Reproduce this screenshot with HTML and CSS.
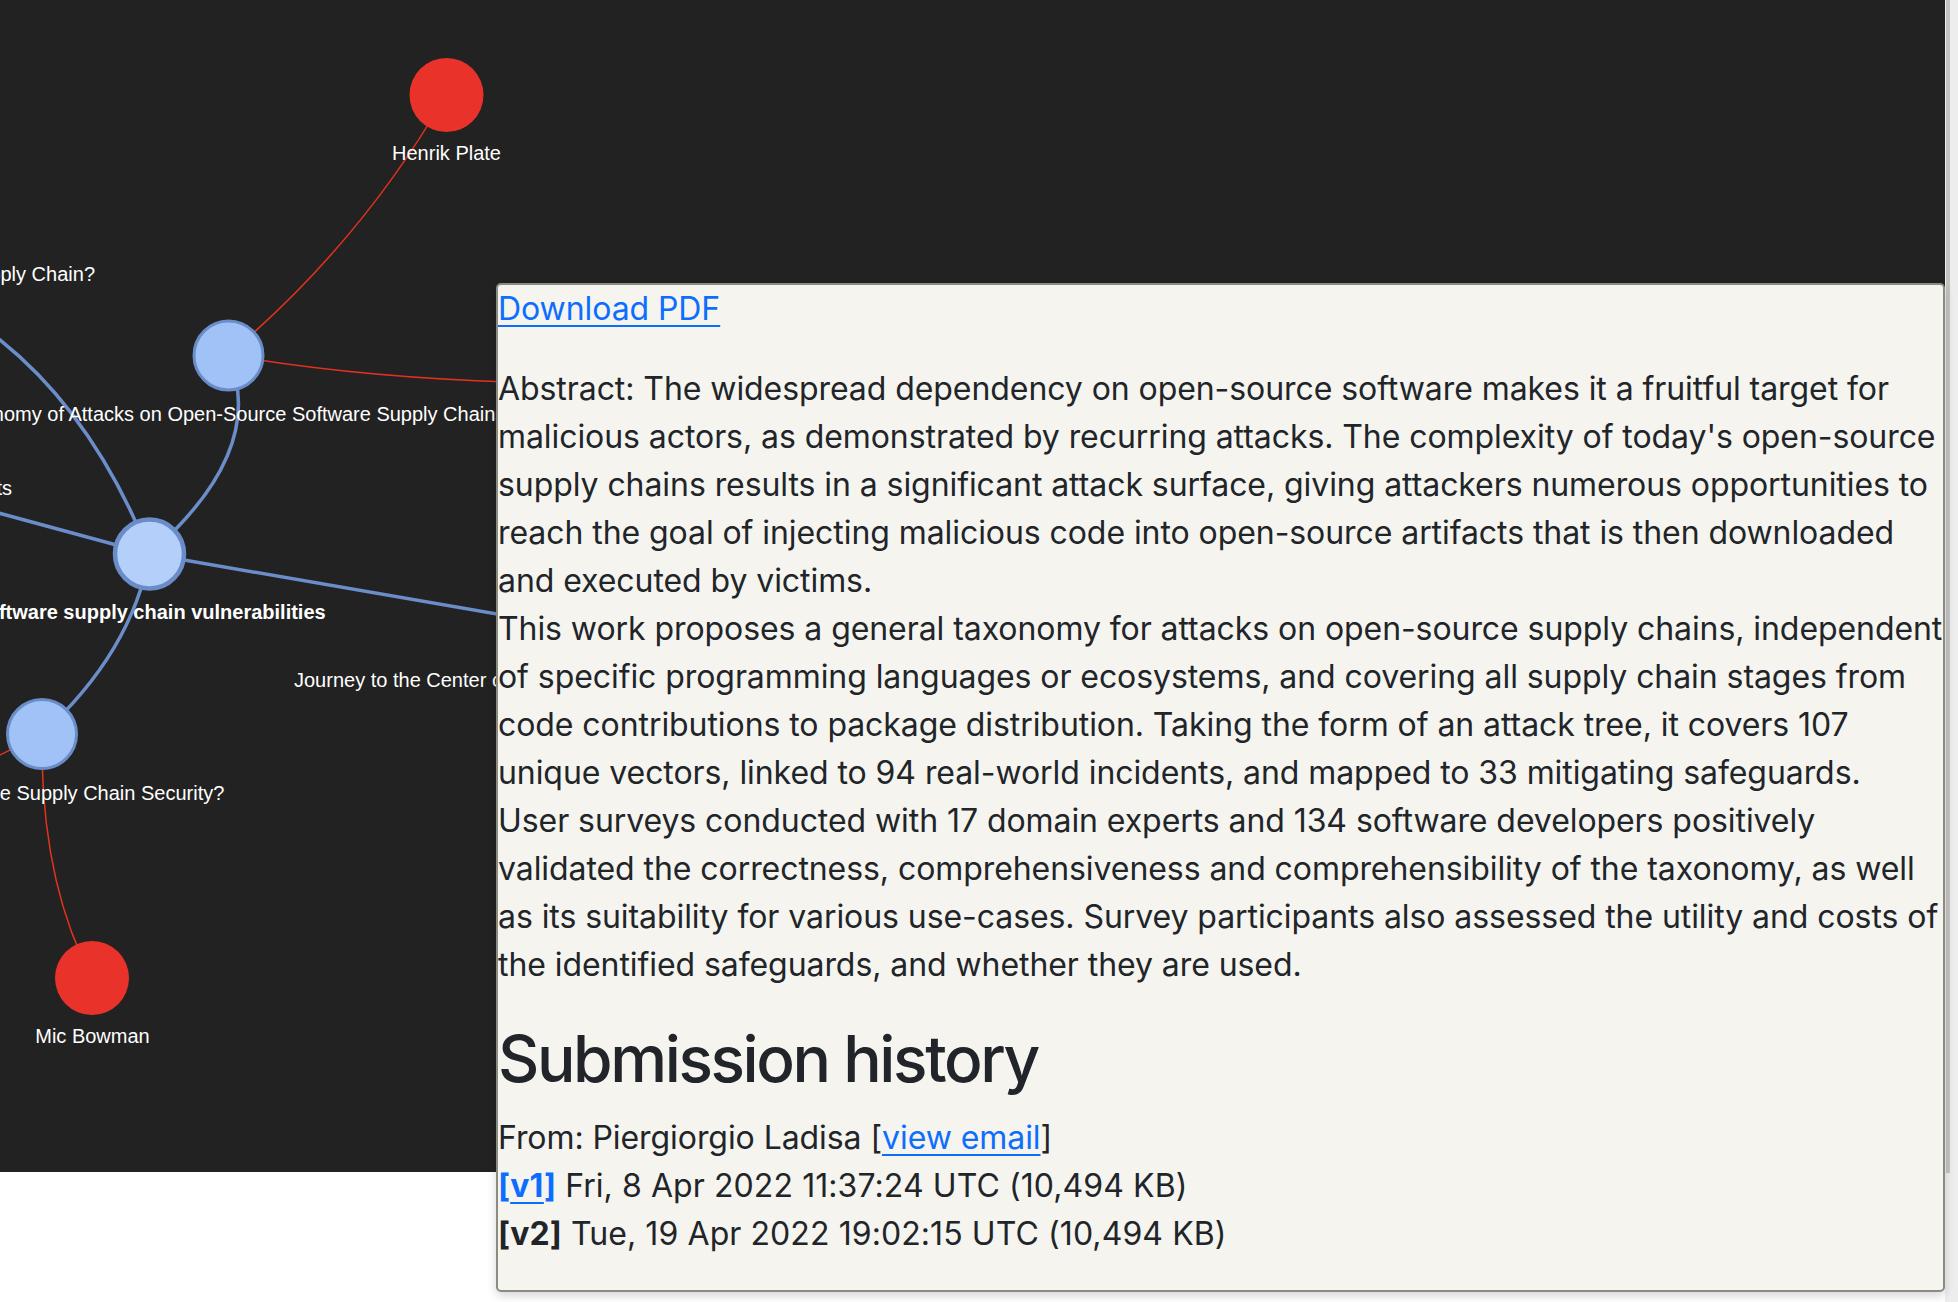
FILE: index.html
```html
<!DOCTYPE html>
<html lang="en">
<head>
<meta charset="utf-8">
<title>Paper graph</title>
<link rel="stylesheet" href="styles.css">
</head>
<body>
<div class="page">
  <main class="graph">
    <svg class="graph-svg" width="1945" height="1172" viewBox="0 0 1945 1172">
      <defs>
        <clipPath id="visible-area"><rect x="-200" y="0" width="697" height="1172"/></clipPath>
      </defs>
      <g class="edges-blue">
        <path d="M228 355 Q269 449.5 149.5 554"/>
        <path d="M149.5 554 Q132 652 42 734"/>
        <path d="M-40 309 L0 340 Q94 415 149.5 554"/>
        <path d="M-60 497 L149.5 554"/>
        <path d="M149.5 554 L543 622"/>
      </g>
      <g class="edges-red">
        <path d="M228 355 Q360 244 446 95"/>
        <path d="M228 355 Q380 381 560 383"/>
        <path d="M42 734 Q40 880 92 978"/>
        <path d="M42 734 L-40 775"/>
      </g>
      <g class="nodes">
        <circle class="node-author" cx="446.5" cy="95" r="37"/>
        <circle class="node-author" cx="92" cy="978" r="37"/>
        <circle class="node-paper" cx="228.5" cy="355.5" r="34.5"/>
        <circle class="node-paper node-focus" cx="149.5" cy="554" r="34.5"/>
        <circle class="node-paper" cx="42" cy="734" r="34.5"/>
      </g>
      <g class="labels">
        <text x="446.5" y="160" text-anchor="middle">Henrik Plate</text>
        <text x="95" y="281" text-anchor="end">What are Weak Links in the npm Supply Chain?</text>
        <text x="12" y="495" text-anchor="end">Detecting Supply Chain Attacks in Open-Source Artifacts</text>
        <text class="label-focus" x="149.5" y="619" text-anchor="middle">Software supply chain vulnerabilities</text>
        <text x="42" y="800" text-anchor="middle">What is Software Supply Chain Security?</text>
        <text x="92.5" y="1043" text-anchor="middle">Mic Bowman</text>
        <g clip-path="url(#visible-area)">
          <text x="228" y="421" text-anchor="middle">Taxonomy of Attacks on Open-Source Software Supply Chains</text>
          <text x="294" y="687" text-anchor="start">Journey to the Center of Software Supply Chain Attacks</text>
        </g>
      </g>
    </svg>
  </main>
  <div class="scrollbar"><div class="scrollbar-thumb"></div></div>
</div>

<section class="panel">
  <p class="pdf"><a href="#">Download PDF</a></p>
  <p class="abstract">Abstract: The widespread dependency on open-source software makes it a fruitful target for<br>
  malicious actors, as demonstrated by recurring attacks. The complexity of today's open-source<br>
  supply chains results in a significant attack surface, giving attackers numerous opportunities to<br>
  reach the goal of injecting malicious code into open-source artifacts that is then downloaded<br>
  and executed by victims.<br>
  This work proposes a general taxonomy for attacks on open-source supply chains, independent<br>
  of specific programming languages or ecosystems, and covering all supply chain stages from<br>
  code contributions to package distribution. Taking the form of an attack tree, it covers 107<br>
  unique vectors, linked to 94 real-world incidents, and mapped to 33 mitigating safeguards.<br>
  User surveys conducted with 17 domain experts and 134 software developers positively<br>
  validated the correctness, comprehensiveness and comprehensibility of the taxonomy, as well<br>
  as its suitability for various use-cases. Survey participants also assessed the utility and costs of<br>
  the identified safeguards, and whether they are used.</p>
  <h2 class="history-title">Submission history</h2>
  <p class="history">From: Piergiorgio Ladisa [<a href="#">view email</a>]<br>
  <span class="version"><strong class="ver-link">[<a href="#">v1</a>]</strong> Fri, 8 Apr 2022 11:37:24 UTC (10,494 KB)</span><br>
  <span class="version"><strong>[v2]</strong> Tue, 19 Apr 2022 19:02:15 UTC (10,494 KB)</span></p>
</section>
</body>
</html>
```

FILE: styles.css
```css
html, body {
  margin: 0;
  padding: 0;
  background: #ffffff;
}

body {
  position: relative;
  width: 1958px;
  height: 1302px;
  overflow: hidden;
  font-family: Inter, "Noto Sans", "Liberation Sans", sans-serif;
}

.page {
  display: flex;
  align-items: flex-start;
  height: 1302px;
}

.graph {
  width: 1945px;
  height: 1172px;
  background: #222222;
  flex: none;
}

.graph-svg {
  display: block;
}

.edges-blue path {
  fill: none;
  stroke: #6b8dca;
  stroke-width: 3.5;
}

.edges-red path {
  fill: none;
  stroke: #e5321f;
  stroke-width: 1.5;
}

.node-author {
  fill: #e9332a;
}

.node-paper {
  fill: #a1c2f6;
  stroke: #6a8dca;
  stroke-width: 3;
}

.node-focus {
  fill: #b5cffb;
  stroke-width: 4.5;
}

.labels text {
  font-family: "Liberation Sans", Arial, sans-serif;
  font-size: 20px;
  fill: #ffffff;
}

.labels .label-focus {
  font-weight: 700;
}

.scrollbar {
  flex: none;
  width: 13px;
  height: 1302px;
  background: #ededed;
  display: flex;
  padding-left: 1px;
  box-sizing: border-box;
}

.scrollbar-thumb {
  width: 4px;
  height: 1173px;
  background: #c3c3c3;
}

.panel {
  position: absolute;
  left: 496px;
  top: 283px;
  width: 1449px;
  box-sizing: border-box;
  border: 2px solid #8a8b81;
  border-radius: 5px;
  background: #f5f4ef;
  box-shadow: 0 4px 10px rgba(0, 0, 0, 0.16);
  color: #212529;
  font-size: 32px;
  line-height: 48px;
  letter-spacing: -0.07px;
}

.panel p {
  margin: 0 0 32px 0;
}

.abstract {
  white-space: nowrap;
}

.panel a {
  color: #0d6efd;
  text-decoration: underline;
  text-underline-offset: 5px;
  text-decoration-thickness: 2px;
}

.history-title {
  margin: 0 0 16px 0;
  font-size: 64px;
  line-height: 1.2;
  font-weight: 500;
  letter-spacing: -2.4px;
}

.ver-link {
  color: #0d6efd;
}

.panel strong {
  font-weight: 700;
}

.version {
  letter-spacing: 0.08px;
}
```
